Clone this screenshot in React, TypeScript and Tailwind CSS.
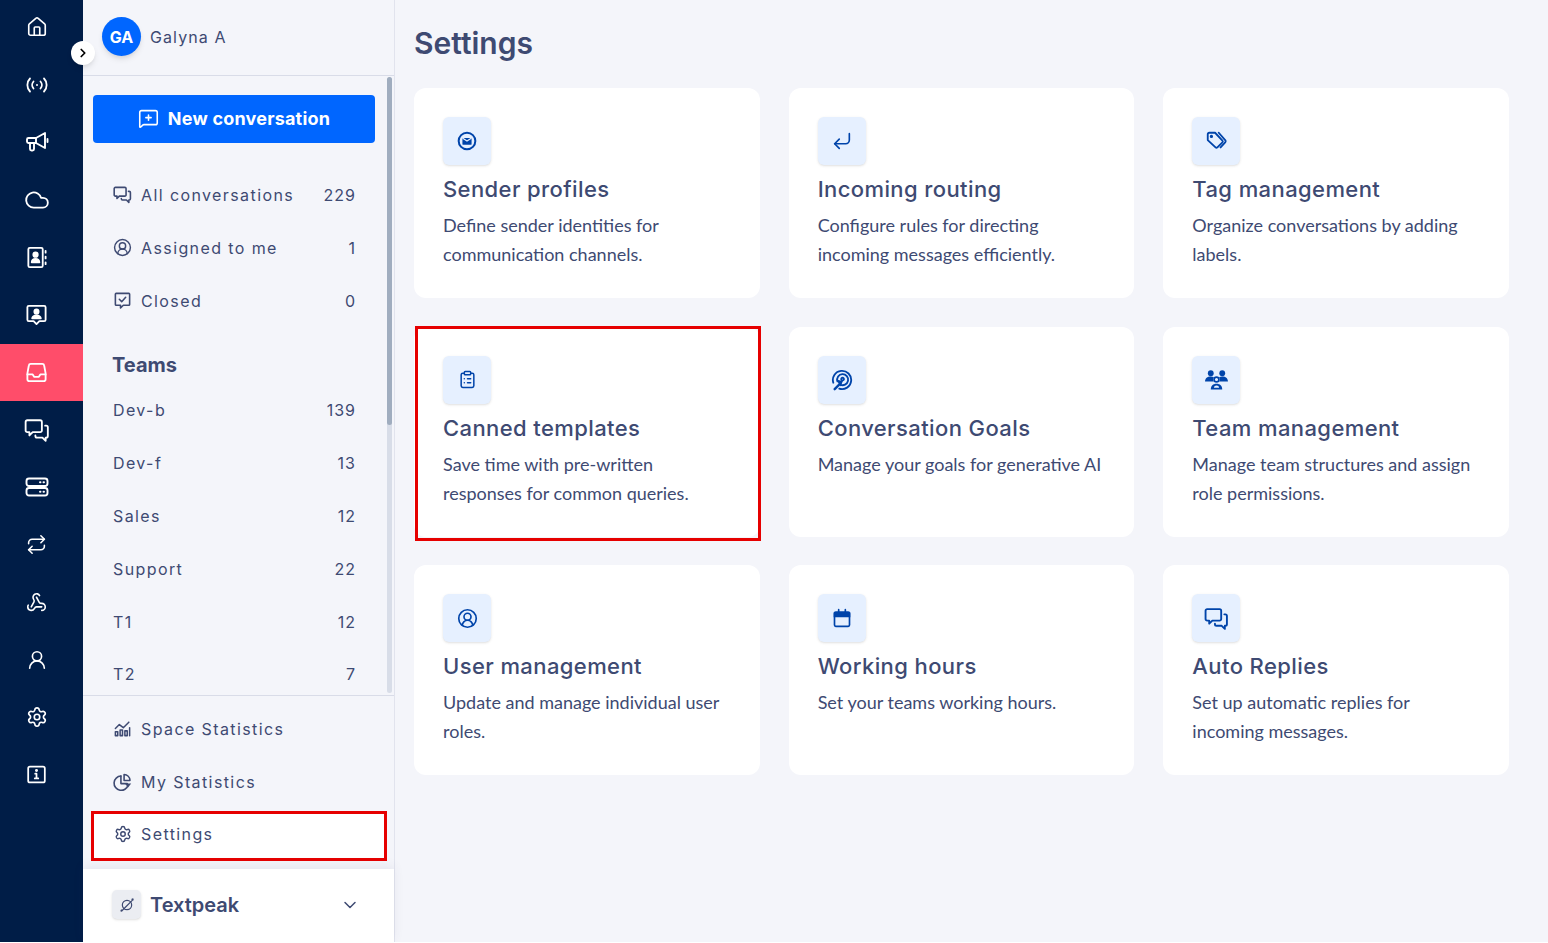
import { ChevronDown, ChevronRight, CircleUserRound, Cloud, CornerDownLeft, ClipboardList, House, MessageSquarePlus, Repeat, Settings, UserRound, Webhook } from 'lucide-react';

const poppins = "font-['Inter','Liberation_Sans',sans-serif]";

// icons the packages do not have
function BubblesIcon({ size = 19, width = 2 }: { size?: number; width?: number }) {
  return (
    <svg width={size} height={size} viewBox="0 0 24 24" fill="none" stroke="currentColor" strokeWidth={width} strokeLinecap="round" strokeLinejoin="round">
      <path d="M3 3h12a1.500 1.500 0 0 1 1.500 1.500v8A1.500 1.500 0 0 1 15 14H8l-3 3v-3H3a1.500 1.500 0 0 1-1.500-1.500v-8A1.500 1.500 0 0 1 3 3z" />
      <path d="M19.500 8h1A1.500 1.500 0 0 1 22 9.500v8a1.500 1.500 0 0 1-1.500 1.500H20v3l-3-3h-5a1.500 1.500 0 0 1-1.500-1.500V17" />
    </svg>
  );
}

function RadioIcon() {
  return (
    <svg width="24" height="24" viewBox="0 0 24 24" fill="none" stroke="currentColor" strokeWidth="1.800" strokeLinecap="round">
      <path d="M5 5.500c-3.500 3.500-3.500 9.500 0 13M19 5.500c3.500 3.500 3.500 9.500 0 13" />
      <path d="M8.500 8.500c-1.800 2-1.800 5 0 7M15.500 8.500c1.800 2 1.800 5 0 7" />
      <circle cx="12" cy="12" r="1" fill="currentColor" stroke="none" />
    </svg>
  );
}

function HornIcon() {
  return (
    <svg width="24" height="24" viewBox="0 0 24 24" fill="none" stroke="currentColor" strokeWidth="1.900" strokeLinecap="round" strokeLinejoin="round">
      <path d="M3.500 8H11l9-5v15l-9-5H3.500A1.500 1.500 0 0 1 2 11.500v-2A1.500 1.500 0 0 1 3.500 8z" />
      <path d="M5 13v6a1.500 1.500 0 0 0 1.500 1.500h1A1.500 1.500 0 0 0 9 19v-6" />
      <path d="M11 8v5M22.500 9v3" />
    </svg>
  );
}

function ContactBookIcon() {
  return (
    <svg width="23" height="23" viewBox="0 0 24 24" fill="none" stroke="currentColor" strokeWidth="1.900" strokeLinecap="round" strokeLinejoin="round">
      <rect x="3.500" y="2" width="15" height="20" rx="1.500" />
      <circle cx="11" cy="9" r="2.300" fill="currentColor" />
      <path d="M7 17c.3-2.500 2-3.500 4-3.500s3.700 1 4 3.500z" fill="currentColor" />
      <path d="M21.500 5v2M21.500 11v2M21.500 17v2" />
    </svg>
  );
}

function PresenterIcon({ size = 23 }: { size?: number }) {
  return (
    <svg width={size} height={size} viewBox="0 0 24 24" fill="none" stroke="currentColor" strokeWidth="1.900" strokeLinecap="round" strokeLinejoin="round">
      <path d="M4 3h16a1.500 1.500 0 0 1 1.500 1.500v13A1.500 1.500 0 0 1 20 19h-5l-3 3-3-3H4a1.500 1.500 0 0 1-1.500-1.500v-13A1.500 1.500 0 0 1 4 3z" />
      <circle cx="12" cy="9" r="2.200" fill="currentColor" />
      <path d="M7.500 16c.6-2.200 2.400-3 4.500-3s3.900.8 4.500 3z" fill="currentColor" />
    </svg>
  );
}

function TrayIcon({ size = 23 }: { size?: number }) {
  return (
    <svg width={size} height={size} viewBox="0 0 24 24" fill="none" stroke="currentColor" strokeWidth="1.900" strokeLinecap="round" strokeLinejoin="round">
      <path d="M6 3h12a2 2 0 0 1 2 1.700L21.500 13v6a2 2 0 0 1-2 2h-15a2 2 0 0 1-2-2v-6L4 4.700A2 2 0 0 1 6 3z" />
      <path d="M2.500 14h5.500l1.500 2.500h5L16 14h5.500" />
    </svg>
  );
}

function ServersIcon() {
  return (
    <svg width="24" height="24" viewBox="0 0 24 24" fill="none" stroke="currentColor" strokeWidth="1.900" strokeLinecap="round">
      <rect x="1.500" y="3.500" width="21" height="7.500" rx="2.500" />
      <rect x="1.500" y="13" width="21" height="7.500" rx="2.500" />
      <path d="M15 7.200h.5M18.500 7.200h.5M15 16.700h.5M18.500 16.700h.5" />
    </svg>
  );
}

function InfoBoxIcon({ size = 21 }: { size?: number }) {
  return (
    <svg width={size} height={size} viewBox="0 0 24 24" fill="none" stroke="currentColor" strokeWidth="2" strokeLinecap="round" strokeLinejoin="round">
      <rect x="2.500" y="3" width="19" height="18" rx="2" />
      <path d="M12 11v5M10.500 11H12M10 16.500h4" />
      <circle cx="12" cy="7.500" r=".7" fill="currentColor" />
    </svg>
  );
}

function ClosedIcon() {
  return (
    <svg width="19" height="19" viewBox="0 0 24 24" fill="none" stroke="currentColor" strokeWidth="2" strokeLinecap="round" strokeLinejoin="round">
      <path d="M4 3h16a1 1 0 0 1 1 1v13a1 1 0 0 1-1 1h-7l-3.500 3.500V18H4a1 1 0 0 1-1-1V4a1 1 0 0 1 1-1z" />
      <path d="M8 10.500l3 3 5-5.500" />
    </svg>
  );
}

function StatsIcon() {
  return (
    <svg width="19" height="19" viewBox="0 0 24 24" fill="none" stroke="currentColor" strokeWidth="1.900" strokeLinecap="round" strokeLinejoin="round">
      <path d="M3 12l5-5 5 4 7-7" />
      <rect x="3" y="16" width="3" height="5" />
      <rect x="9" y="14" width="3" height="7" />
      <rect x="15" y="15" width="3" height="6" />
      <path d="M21 11v10" />
    </svg>
  );
}

function PieIcon() {
  return (
    <svg width="20" height="20" viewBox="0 0 24 24" fill="none" stroke="currentColor" strokeWidth="2" strokeLinecap="round" strokeLinejoin="round">
      <path d="M10 4.500a9 9 0 1 0 9 11.500" />
      <path d="M10 4.500V14h8" />
      <path d="M14 2.500a8 8 0 0 1 7.500 7.500H14z" />
      <path d="M15 14h8l-4 5z" fill="currentColor" stroke="none" />
    </svg>
  );
}

function PlanetIcon() {
  return (
    <svg width="16" height="16" viewBox="0 0 24 24" fill="none" stroke="currentColor" strokeWidth="1.800" strokeLinecap="round">
      <circle cx="12" cy="12" r="7" />
      <path d="M4 21L21 4M3.500 19.500c-1 1.500-.8 2 1 1.500M19.500 3.500c1.500-1 2-.8 1.500 1" />
    </svg>
  );
}

function SenderIcon() {
  return (
    <svg width="20" height="20" viewBox="0 0 24 24" fill="none" stroke="currentColor" strokeWidth="2.400">
      <circle cx="12" cy="12" r="10" />
      <path d="M6.500 8.500h11v7a1 1 0 0 1-1 1h-9a1 1 0 0 1-1-1z" fill="currentColor" stroke="none" />
      <path d="M6.500 8.500l5.500 3.500 5.500-3.500" stroke="#e6f0ff" strokeWidth="1.400" />
    </svg>
  );
}

function TagsIcon() {
  return (
    <svg width="22" height="22" viewBox="0 0 24 24" fill="none" stroke="currentColor" strokeWidth="2" strokeLinecap="round" strokeLinejoin="round">
      <path d="M3 4.500A1.500 1.500 0 0 1 4.500 3H11l8 8.500a1.500 1.500 0 0 1 0 2L13.500 19a1.500 1.500 0 0 1-2 0L3 11z" />
      <path d="M15 3l7 8a2 2 0 0 1 0 2.500L17 19" />
      <circle cx="7" cy="7" r=".8" fill="currentColor" />
    </svg>
  );
}

function GoalIcon() {
  return (
    <svg width="22" height="22" viewBox="0 0 24 24" fill="none" stroke="currentColor" strokeWidth="2" strokeLinecap="round">
      <path d="M9 21.500A10 10 0 1 0 2.500 15" />
      <path d="M10 17a6 6 0 1 0-3-3.500" />
      <path d="M12.500 12.500a1.500 1.500 0 1 0-1-.5" />
      <path d="M4 22l6-6" strokeWidth="2.600" />
      <path d="M5.500 11.500l7.500 1.500-2.500 6z" fill="currentColor" stroke="none" />
    </svg>
  );
}

function TeamIcon() {
  return (
    <svg width="25" height="25" viewBox="0 0 24 24" fill="currentColor">
      <circle cx="6.500" cy="6" r="2.800" />
      <circle cx="17.500" cy="6" r="2.800" />
      <path d="M1 14c0-3 2.200-4.800 5.500-4.800 1.200 0 2.200.2 3 .7-.5.8-.7 1.600-.6 2.600.1.500.2 1 .5 1.500z" />
      <path d="M23 14c0-3-2.200-4.800-5.500-4.800-1.200 0-2.200.2-3 .7.5.8.7 1.600.6 2.600-.1.500-.2 1-.5 1.500z" />
      <circle cx="12" cy="12" r="2.300" fill="none" stroke="currentColor" strokeWidth="1.600" />
      <path d="M6.500 21.500c0-3.500 2.200-5.500 5.500-5.500s5.500 2 5.500 5.500z" />
      <path d="M9.500 20c.2-1.500 1.100-2.300 2.500-2.300s2.300.8 2.500 2.300z" fill="#e6f0ff" />
    </svg>
  );
}

function CalendarIcon() {
  return (
    <svg width="20" height="20" viewBox="0 0 24 24" fill="none" stroke="currentColor" strokeWidth="2" strokeLinecap="round">
      <rect x="3" y="5" width="18" height="17" rx="1.500" />
      <path d="M3 6h18v4H3z" fill="currentColor" />
      <path d="M8 2v3M16 2v3" />
    </svg>
  );
}

const railIcons = [
  <House size={22} strokeWidth={1.800} />,
  <RadioIcon />,
  <HornIcon />,
  <Cloud size={26} strokeWidth={1.700} />,
  <ContactBookIcon />,
  <PresenterIcon />,
  <TrayIcon />,
  <BubblesIcon size={26} width={1.700} />,
  <ServersIcon />,
  <Repeat size={21} strokeWidth={1.800} />,
  <Webhook size={21} strokeWidth={1.800} />,
  <UserRound size={22} strokeWidth={1.800} />,
  <Settings size={22} strokeWidth={1.800} />,
  <InfoBoxIcon />,
];

const inboxRows = [
  { label: 'All conversations', count: '229', icon: <BubblesIcon /> },
  { label: 'Assigned to me', count: '1', icon: <CircleUserRound size={19} strokeWidth={1.800} /> },
  { label: 'Closed', count: '0', icon: <ClosedIcon /> },
];

const teams = [
  { label: 'Dev-b', count: '139' },
  { label: 'Dev-f', count: '13' },
  { label: 'Sales', count: '12' },
  { label: 'Support', count: '22' },
  { label: 'T1', count: '12' },
  { label: 'T2', count: '7' },
];

const cards = [
  { title: 'Sender profiles', text: 'Define sender identities for communication channels.', icon: <SenderIcon /> },
  { title: 'Incoming routing', text: 'Configure rules for directing incoming messages efficiently.', icon: <CornerDownLeft size={22} strokeWidth={1.800} /> },
  { title: 'Tag management', text: 'Organize conversations by adding labels.', icon: <TagsIcon /> },
  { title: 'Canned templates', text: 'Save time with pre-written responses for common queries.', icon: <ClipboardList size={19} strokeWidth={1.900} /> },
  { title: 'Conversation Goals', text: 'Manage your goals for generative AI', icon: <GoalIcon /> },
  { title: 'Team management', text: 'Manage team structures and assign role permissions.', icon: <TeamIcon /> },
  { title: 'User management', text: 'Update and manage individual user roles.', icon: <CircleUserRound size={21} strokeWidth={1.900} /> },
  { title: 'Working hours', text: 'Set your teams working hours.', icon: <CalendarIcon /> },
  { title: 'Auto Replies', text: 'Set up automatic replies for incoming messages.', icon: <BubblesIcon size={25} width={1.800} /> },
];

export default function App() {
  return (
    <div className={`flex h-[942px] w-full overflow-hidden bg-[#f4f5fa] text-[#3e4a72] ${poppins}`}>
      {/* rail */}
      <div className="w-[83px] shrink-0 bg-[#001d47] text-white">
        <div className="-mt-[1.500px]">
          {railIcons.map((icon, i) => (
            <div key={i} className={`flex h-[57.500px] items-center justify-center pr-[2px] ${i === 6 ? 'bg-[#ff4d6a]' : ''}`}>
              <span className="-translate-x-[4px]">{icon}</span>
            </div>
          ))}
        </div>
      </div>

      {/* sidebar */}
      <div className="relative flex w-[312px] shrink-0 flex-col border-r border-[#e1e3ed]">
        <button className="absolute left-[-12px] top-[41px] z-10 flex h-6 w-6 items-center justify-center rounded-full bg-white text-black shadow-md">
          <ChevronRight size={14} strokeWidth={3} />
        </button>

        <div className="flex h-[76px] shrink-0 items-center gap-[9px] border-b border-[#d9dce8] pb-[2px] pl-[19px]">
          <div className="flex h-[39px] w-[39px] items-center justify-center rounded-full bg-[#0066ff] text-[16px] font-bold text-white shadow-md">GA</div>
          <span className="text-[16px] tracking-[1.100px]">Galyna A</span>
        </div>

        <div className="relative h-[619px] shrink-0 overflow-hidden pl-[10px] pr-[19px]">
          <div className="absolute right-[2px] top-[1px] h-[616px] w-[5px] rounded-full bg-[#d8dde8]">
            <div className="h-[348px] w-full rounded-full bg-[#a0adbf]" />
          </div>
          <button className="mt-[19px] flex h-12 w-[282px] items-center justify-center gap-[9px] rounded-[4px] bg-[#0066ff] pb-[2px] text-[18px] font-bold tracking-[0.2px] text-white">
            <MessageSquarePlus size={21} strokeWidth={1.800} />
            New conversation
          </button>
          <div className="mt-[25px]">
            {inboxRows.map((r) => (
              <div key={r.label} className="flex h-[53px] items-center pl-[20px] pr-[19px] text-[16px] tracking-[1.400px]">
                <span className="mr-[9px] flex w-[19px] justify-center">{r.icon}</span>
                <span className="flex-1">{r.label}</span>
                <span className="tracking-[1px]">{r.count}</span>
              </div>
            ))}
          </div>
          <div className="h-[57px] pl-[19px] pt-[26px] text-[20px] font-bold leading-6">Teams</div>
          {teams.map((t) => (
            <div key={t.label} className="flex h-[52.800px] items-center justify-between pl-[20px] pr-[19px] text-[16px] tracking-[1.400px]">
              <span>{t.label}</span>
              <span className="tracking-[1px]">{t.count}</span>
            </div>
          ))}
        </div>

        <div className="flex-1 border-t border-[#d9dce8] px-[8px] pt-[6px]">
          <div className="flex h-[53px] items-center pl-[22px] text-[16px] tracking-[1.400px]">
            <span className="mr-[9px] flex w-[19px] justify-center"><StatsIcon /></span>
            Space Statistics
          </div>
          <div className="flex h-[53px] items-center pl-[22px] text-[16px] tracking-[1.400px]">
            <span className="mr-[9px] flex w-[19px] justify-center"><PieIcon /></span>
            My Statistics
          </div>
          <div className="mt-[3px] flex h-[50px] w-[296px] items-center border-[3px] border-[#e60000] bg-white pb-[4px] pl-[19px] text-[16px] tracking-[1.400px]">
            <span className="mr-[9px] flex w-[19px] justify-center"><Settings size={18} strokeWidth={1.900} /></span>
            Settings
          </div>
        </div>

        <div className="flex h-[73px] shrink-0 items-center bg-white pb-[2px] pl-[29px] pr-[34px] shadow-[0_-3px_10px_rgba(60,70,110,0.08)]">
          <div className="flex h-[29px] w-[29px] items-center justify-center rounded-[5px] bg-[#ebedf2] shadow-sm"><PlanetIcon /></div>
          <span className="ml-[9px] flex-1 text-[20px] font-semibold">Textpeak</span>
          <ChevronDown size={20} strokeWidth={1.800} />
        </div>
      </div>

      {/* main */}
      <div className="flex-1 pl-[19px] pr-[39px]">
        <h1 className="h-[88px] pt-[23px] text-[30px] font-semibold leading-10">Settings</h1>
        <div className="grid grid-cols-3 gap-x-[29px] gap-y-[28.500px]">
          {cards.map((c) => (
            <div key={c.title} className="relative h-[210px] rounded-xl bg-white p-[29px]">
              <div className="flex h-12 w-12 items-center justify-center rounded-md bg-[#e6f0ff] text-[#0044aa] shadow-sm">{c.icon}</div>
              <h2 className="mt-[8px] text-[22px] font-medium leading-8 tracking-[0.400px]">{c.title}</h2>
              <p className="mt-[6px] font-['Lato',sans-serif] text-[18px] leading-[29px]">{c.text}</p>
              {c.title === 'Canned templates' && (
                <div className="pointer-events-none absolute -bottom-1 -right-px -top-px left-px border-[3px] border-[#e60000]" />
              )}
            </div>
          ))}
        </div>
      </div>
    </div>
  );
}
